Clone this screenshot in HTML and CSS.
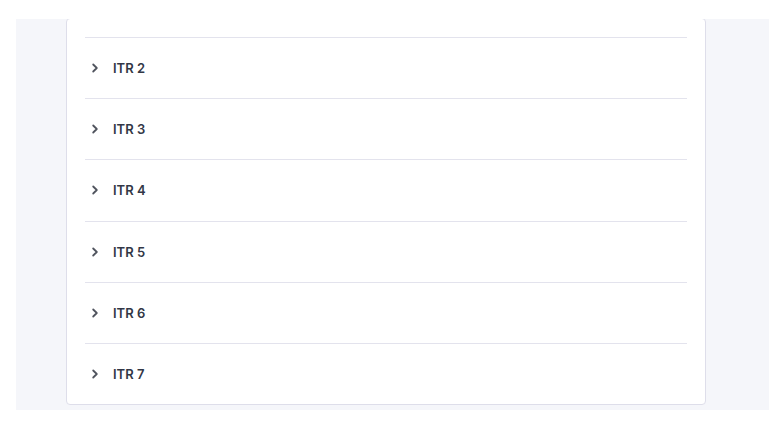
FILE: index.html
```html
<!DOCTYPE html>
<html>
<head>
<meta charset="utf-8">
<link rel="stylesheet" href="styles.css">
</head>
<body>
<div class="viewport">
  <div class="card">
    <div class="row"><svg class="chev" viewBox="0 0 16 16"><polyline points="6.2,4.5 9.8,8 6.2,11.5"/></svg><span class="label">ITR 2</span></div>
    <div class="row"><svg class="chev" viewBox="0 0 16 16"><polyline points="6.2,4.5 9.8,8 6.2,11.5"/></svg><span class="label">ITR 3</span></div>
    <div class="row"><svg class="chev" viewBox="0 0 16 16"><polyline points="6.2,4.5 9.8,8 6.2,11.5"/></svg><span class="label">ITR 4</span></div>
    <div class="row"><svg class="chev" viewBox="0 0 16 16"><polyline points="6.2,4.5 9.8,8 6.2,11.5"/></svg><span class="label">ITR 5</span></div>
    <div class="row"><svg class="chev" viewBox="0 0 16 16"><polyline points="6.2,4.5 9.8,8 6.2,11.5"/></svg><span class="label">ITR 6</span></div>
    <div class="row"><svg class="chev" viewBox="0 0 16 16"><polyline points="6.2,4.5 9.8,8 6.2,11.5"/></svg><span class="label">ITR 7</span></div>
  </div>
</div>
</body>
</html>
```
FILE: styles.css
```css
html, body {
  margin: 0;
  padding: 0;
  background: #ffffff;
  font-family: Inter, "Noto Sans", sans-serif;
}
.viewport {
  margin: 19px 0 0 16px;
  width: 753px;
  height: 391px;
  background: #f5f6fa;
  overflow: hidden;
}
.card {
  margin: -1px 0 0 50px;
  width: 602px;
  background: #ffffff;
  border: 1px solid #dedeea;
  border-radius: 4px;
  padding: 18px 18px 0;
  box-sizing: content-box;
}
.row {
  display: flex;
  align-items: center;
  height: 60.2px;
  padding-left: 2px;
  gap: 10px;
  border-top: 1px solid #e3e3ed;
}
.chev {
  width: 16px;
  height: 16px;
  fill: none;
  stroke: #50545e;
  stroke-width: 1.8;
  stroke-linecap: round;
  stroke-linejoin: round;
}
.label {
  font-size: 13px;
  font-weight: 600;
  color: #323746;
}
```
